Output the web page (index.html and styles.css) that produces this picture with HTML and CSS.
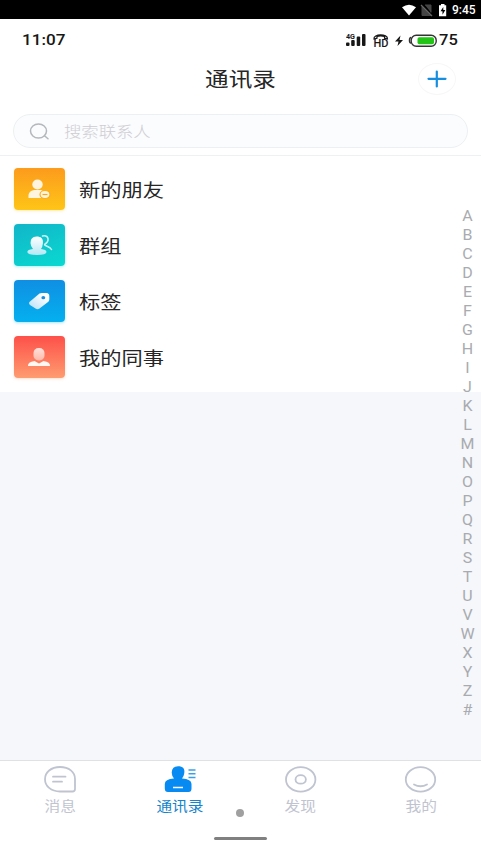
FILE: index.html
```
<!DOCTYPE html>
<html lang="zh-CN">
<head>
<meta charset="utf-8">
<title>通讯录</title>
<link rel="stylesheet" href="styles.css">
</head>
<body>
<div class="system-bar">
  <svg width="48" height="18" viewBox="0 0 48 18">
    <path d="M0 6.2Q7 1.2 14 6.2L7 14.6Z" fill="#fff"/>
    <path d="M20 5.500V14.500H29M23 4H29V11.500" fill="#444" stroke="#444"/><path d="M19 4L30 15" stroke="#666" stroke-width="1.2"/>
    <path d="M37 4.300h2V3h3.500v1.300h1.700v11h-7.200z" fill="#fff"/><path d="M41.300 6L38.500 10.300h2v3.500l2.800-4.700h-2z" fill="#000"/>
  </svg>
  <span class="system-time">9:45</span>
</div>
<div class="phone-bar">
  <span class="wide clock">11:07</span>
  <div class="phone-status">
    <svg width="92" height="18" viewBox="0 0 92 18">
      <text x="0" y="7.500" class="tiny" textLength="9" lengthAdjust="spacingAndGlyphs">4G</text>
      <g fill="#171717"><rect x="0" y="11.500" width="3.500" height="3.500" rx="1"/><rect x="5.200" y="9" width="3.500" height="6" rx="1"/><rect x="10.700" y="5.500" width="3.500" height="9.500" rx="1"/><rect x="16" y="3" width="3.500" height="12" rx="1"/></g>
      <path d="M28 8C27 2.500 42 2.500 41.500 8L38.500 7.200V5.400Q34.500 4.200 31 5.400V7.200Z" fill="none" stroke="#171717" stroke-width="1.200"/>
      <text x="27.500" y="15.500" class="hd" textLength="15" lengthAdjust="spacingAndGlyphs">HD</text>
      <path d="M54.500 4.500L49 10.500H52.500L51.500 15L57 9H53.500Z" fill="#171717"/>
      <path d="M65 6.500Q63.500 6.500 63.500 9.300T65 12" fill="none" stroke="#333" stroke-width="1.500"/>
      <rect x="65.200" y="4.200" width="25" height="11" rx="5" fill="#fff" stroke="#333" stroke-width="1.400"/>
      <rect x="71.500" y="6.200" width="16.500" height="7" rx="1.800" fill="#22c416"/>
    </svg>
    <span class="wide battery">75</span>
  </div>
</div>
<header class="header">
  <h1 class="wide title">通讯录</h1>
  <button class="add" aria-label="添加"><svg width="20" height="18" viewBox="0 0 20 18"><path d="M1.500 8.800H18.500M9.800 1.500V16.500" stroke="#168ee0" stroke-width="2.200" stroke-linecap="round"/></svg></button>
</header>
<div class="search-wrap">
  <div class="search">
    <svg width="22" height="20" viewBox="0 0 22 20" fill="none" stroke="#b4b7bb" stroke-width="1.500" stroke-linecap="round"><ellipse cx="9.500" cy="10" rx="8" ry="7"/><path d="M15.500 14.700L19 17.700"/></svg>
    <span class="wide placeholder">搜索联系人</span>
  </div>
</div>
<main class="main">
  <ul class="list">
    <li class="row">
      <div class="tile orange"><svg width="50" height="42" viewBox="0 0 50 42"><g fill="#fff5df"><ellipse cx="23.500" cy="16.500" rx="5.200" ry="5"/><path d="M14.500 30V27Q15 23 20 22H27Q32 23 32 30Z"/></g><ellipse cx="31" cy="26.500" rx="5" ry="4" fill="#fff5df" stroke="#fdab19" stroke-width="1.200"/><path d="M28.500 26.500h5" stroke="#fba31a" stroke-width="1.200"/></svg></div>
      <span class="wide label">新的朋友</span>
    </li>
    <li class="row">
      <div class="tile teal"><svg width="50" height="42" viewBox="0 0 50 42"><defs><linearGradient id="g1" x2="0" y2="1"><stop stop-color="#fff"/><stop offset="1" stop-color="#b5e8f4"/></linearGradient></defs><path d="M22.500 12.500C27 12.500 29.300 14.500 29 19Q28.500 23 27 25Q32.500 25.500 32.500 28Q32.500 31 23 31T13.300 28Q13.300 25.500 19 25Q16.500 22 16.500 19Q16.500 12.500 22.500 12.500Z" fill="url(#g1)"/><path d="M28.500 12Q33 11 34 14.500Q34.500 18 31 20C29 22 35.500 21.500 37.500 25.500" fill="none" stroke="#c8f6f6" stroke-width="1.500" stroke-linecap="round"/></svg></div>
      <span class="wide label">群组</span>
    </li>
    <li class="row">
      <div class="tile blue"><svg width="50" height="42" viewBox="0 0 50 42"><defs><linearGradient id="g2" x1="1" x2="0" y2="1"><stop offset=".2" stop-color="#fff"/><stop offset="1" stop-color="#b3def8"/></linearGradient></defs><path d="M25.500 13.500Q26.500 13 28 13H32.500Q35.300 13.300 35.300 16V19.500Q35.300 21 34 22L25.500 28.500Q23.500 30 21.500 28.500L16 25Q14 23.200 16 21.500Z" fill="url(#g2)"/><ellipse cx="29.300" cy="17.700" rx="1.900" ry="1.600" fill="#168edb"/></svg></div>
      <span class="wide label">标签</span>
    </li>
    <li class="row">
      <div class="tile red"><svg width="50" height="42" viewBox="0 0 50 42"><defs><linearGradient id="g3" x2="0" y2="1"><stop stop-color="#ffe1da"/><stop offset="1" stop-color="#ffb9aa"/></linearGradient></defs><rect x="19.500" y="12" width="11" height="12.500" rx="5" fill="url(#g3)"/><path d="M14 30Q13.500 26 20.500 25L25 27.500L29.500 25Q36.500 26 36 30Z" fill="#fff7f2"/></svg></div>
      <span class="wide label">我的同事</span>
    </li>
  </ul>
  <nav class="index">
    <span>A</span><span>B</span><span>C</span><span>D</span><span>E</span><span>F</span><span>G</span><span>H</span><span>I</span><span>J</span><span>K</span><span>L</span><span>M</span><span>N</span><span>O</span><span>P</span><span>Q</span><span>R</span><span>S</span><span>T</span><span>U</span><span>V</span><span>W</span><span>X</span><span>Y</span><span>Z</span><span>#</span>
  </nav>
</main>
<footer class="footer">
  <nav class="tabs">
    <a class="tab"><svg width="34" height="28" viewBox="0 0 34 28" fill="none" stroke="#bfc4d0" stroke-width="1.800" stroke-linecap="round"><path d="M17 2C26 2 32 7 32 14V24Q32 26.500 29.500 26.500H17C8 26.500 2 21 2 14.200S8 2 17 2Z"/><path d="M10 11.700h12.500M10 16.700h9"/></svg><span class="wide">消息</span></a>
    <a class="tab active"><svg width="34" height="28" viewBox="0 0 34 28"><path d="M15 1.300C20 1.300 22 4 21.300 8Q21 11 19 13.500Q28.500 14 28.500 19V23.500Q28.500 27 25.500 27H5Q1.800 27 1.800 23.500V19Q1.800 14 11 13.500Q8.800 11 8.700 7.500Q9 1.300 15 1.300Z" fill="#078af2"/><path d="M25.500 5h7M25.500 8.800h7M25.500 12.500h7" stroke="#3a9fea" stroke-width="1.500"/><path d="M10 22.500h10" stroke="#fff" stroke-width="1.500"/></svg><span class="wide">通讯录</span></a>
    <a class="tab"><svg width="34" height="28" viewBox="0 0 34 28" fill="none" stroke="#bfc4d0" stroke-width="1.800"><ellipse cx="16.700" cy="14.400" rx="14.700" ry="12.200"/><ellipse cx="16.700" cy="14.400" rx="5.200" ry="4.300"/></svg><span class="wide">发现</span></a>
    <a class="tab"><svg width="34" height="28" viewBox="0 0 34 28" fill="none" stroke="#bfc4d0" stroke-width="1.800" stroke-linecap="round"><ellipse cx="16.500" cy="14.400" rx="14.700" ry="12.200"/><path d="M10 19.500Q16.500 23 23 19.500"/></svg><span class="wide">我的</span></a>
  </nav>
  <i class="dot"></i>
  <div class="home"></div>
</footer>
</body>
</html>
```
FILE: styles.css
```
* { box-sizing: border-box; }
body {
  margin: 0;
  height: 856px;
  display: flex;
  flex-direction: column;
  overflow: hidden;
  background: #fff;
  color: #262626;
  font-family: Roboto, "Noto Sans CJK SC", sans-serif;
}
svg { display: block; flex: none; }
.wide { display: block; transform: scaleX(1.18); transform-origin: left center; white-space: nowrap; }
.system-bar {
  height: 19px;
  padding: 0 6px 0 0;
  display: flex;
  justify-content: flex-end;
  align-items: center;
  gap: 2px;
  background: #000;
  color: #fff;
}
.system-time { width: 23px; font-size: 12px; font-weight: 500; line-height: 20px; padding-top: 1px; }
.phone-bar {
  height: 40px;
  padding: 1px 0 0 22px;
  display: flex;
  align-items: center;
  justify-content: space-between;
  color: #171717;
}
.clock, .battery { font-size: 15px; font-weight: 500; line-height: 18px; }
.clock { transform: scaleX(1.14); }
.battery { transform: scaleX(1.1); }
.phone-status { width: 135px; display: flex; gap: 1px; }
.tiny { font: 700 7px Roboto, sans-serif; fill: #171717; }
.hd { font: 500 11px Roboto, sans-serif; fill: #171717; }
.header {
  height: 40px;
  display: grid;
  grid-template-columns: 1fr auto 1fr;
  align-items: center;
}
.title { grid-column: 2; margin: 0; padding-top: 2px; font-size: 20px; font-weight: 400; line-height: 38px; transform-origin: 55% center; }
.add {
  justify-self: end;
  width: 38px;
  height: 32px;
  margin-right: 25px;
  padding: 0;
  display: grid;
  place-items: center;
  border: 1px solid #f7f7f8;
  border-radius: 50%;
  background: #fff;
}
.search-wrap { height: 57px; padding: 15px 13px 0; border-bottom: 1px solid #eff0f1; }
.search {
  height: 34px;
  padding-left: 15px;
  display: flex;
  align-items: center;
  gap: 13px;
  border: 1px solid #edf0f2;
  border-radius: 18px;
  background: #fafcfe;
}
.placeholder { padding-top: 2px; color: #cfccd2; font-size: 14.7px; font-weight: 300; line-height: 30px; }
.main { flex: 1; position: relative; background: #f5f7fb; }
.list { height: 236px; margin: 0; padding: 12px 14px 0; list-style: none; background: #fff; }
.row { height: 56px; display: flex; align-items: flex-start; gap: 14px; }
.tile { width: 51px; height: 42px; border-radius: 4px; }
.orange { background: linear-gradient(#fc9b1d, #fec517); box-shadow: 0 1px 3px #fec51755; }
.teal { background: linear-gradient(160deg, #12b5c8, #09d9d1); box-shadow: 0 1px 3px #09d9d155; }
.blue { background: linear-gradient(#108fe3, #04b0ef); box-shadow: 0 1px 3px #04b0ef55; }
.red { background: linear-gradient(#fd5049, #fe9c70); box-shadow: 0 1px 3px #fe9c7055; }
.label { font-size: 18px; line-height: 46px; }
.index {
  position: absolute;
  top: 50px;
  right: 3px;
  width: 21px;
  display: flex;
  flex-direction: column;
  color: #a9abaf;
}
.index span { height: 19px; line-height: 20px; font-size: 14px; text-align: center; transform: scaleX(1.14); }
.footer { height: 96px; position: relative; border-top: 1px solid #dfe1e5; background: #fff; }
.tabs { height: 76px; display: grid; grid-template-columns: repeat(4, 1fr); }
.tab { padding-top: 4px; display: flex; flex-direction: column; align-items: center; color: #bfc4d0; font-size: 13.3px; line-height: 27px; }
.tab .wide { transform-origin: center; }
.active { color: #1684cc; }
.dot { position: absolute; left: 236px; top: 48px; width: 8px; height: 8px; border-radius: 50%; background: #a0a0a0; }
.home { width: 53px; height: 3px; margin: 0 auto; border-radius: 2px; background: #808080; }
```
